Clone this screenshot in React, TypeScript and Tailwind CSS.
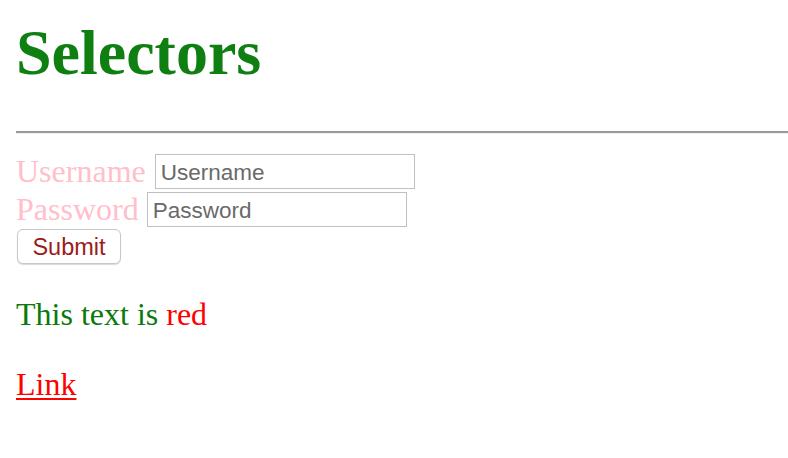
import React from 'react';

const App: React.FC = () => {
  return (
    <div className="min-h-screen bg-white px-4 pt-[16px] font-['Liberation_Serif',serif] text-[32px] leading-[1.15]">
      <h1 className="text-[64px] font-bold leading-[74px] text-[#0f7f12]">Selectors</h1>

      <div className="mt-[41px] -mr-4 h-[3px] border-t-2 border-b border-t-[#9a9a9a] border-b-[#eeeeee]" />

      <form className="mt-[18px] flex flex-col items-start" onSubmit={(e) => e.preventDefault()}>
        <div className="flex h-[38px] items-center">
          <label className="text-[#ffc0cb]">Username</label>
          <input
            type="text"
            placeholder="Username"
            className="ml-[9px] h-[35px] w-[260px] border border-[#c0c0c0] px-[5px] pt-[3px] font-['Liberation_Sans',sans-serif] text-[22.5px] text-[#555] placeholder:text-[#6a6a6a] outline-none"
          />
        </div>
        <div className="flex h-[38px] items-center">
          <label className="text-[#ffc0cb]">Password</label>
          <input
            type="password"
            placeholder="Password"
            className="ml-[8px] h-[35px] w-[260px] border border-[#c0c0c0] px-[5px] pt-[3px] font-['Liberation_Sans',sans-serif] text-[22.5px] text-[#555] placeholder:text-[#6a6a6a] outline-none"
          />
        </div>
        <button
          type="submit"
          className="ml-px mt-px h-[35px] w-[104px] rounded-[6px] border border-[#c8c8c8] bg-white pt-[2px] font-['Liberation_Sans',sans-serif] text-[23.5px] leading-none text-[#9b1c1c] shadow-[0_1px_1px_rgba(0,0,0,0.15)]"
        >
          Submit
        </button>
      </form>

      <p className="mt-[32px] text-[#0a7a0a]">
        This text is <span className="text-[#ff0000]">red</span>
      </p>

      <p className="mt-[33px]">
        <a href="#" className="text-[#ff0000] underline decoration-2 underline-offset-[3px]">Link</a>
      </p>
    </div>
  );
};

export default App;
